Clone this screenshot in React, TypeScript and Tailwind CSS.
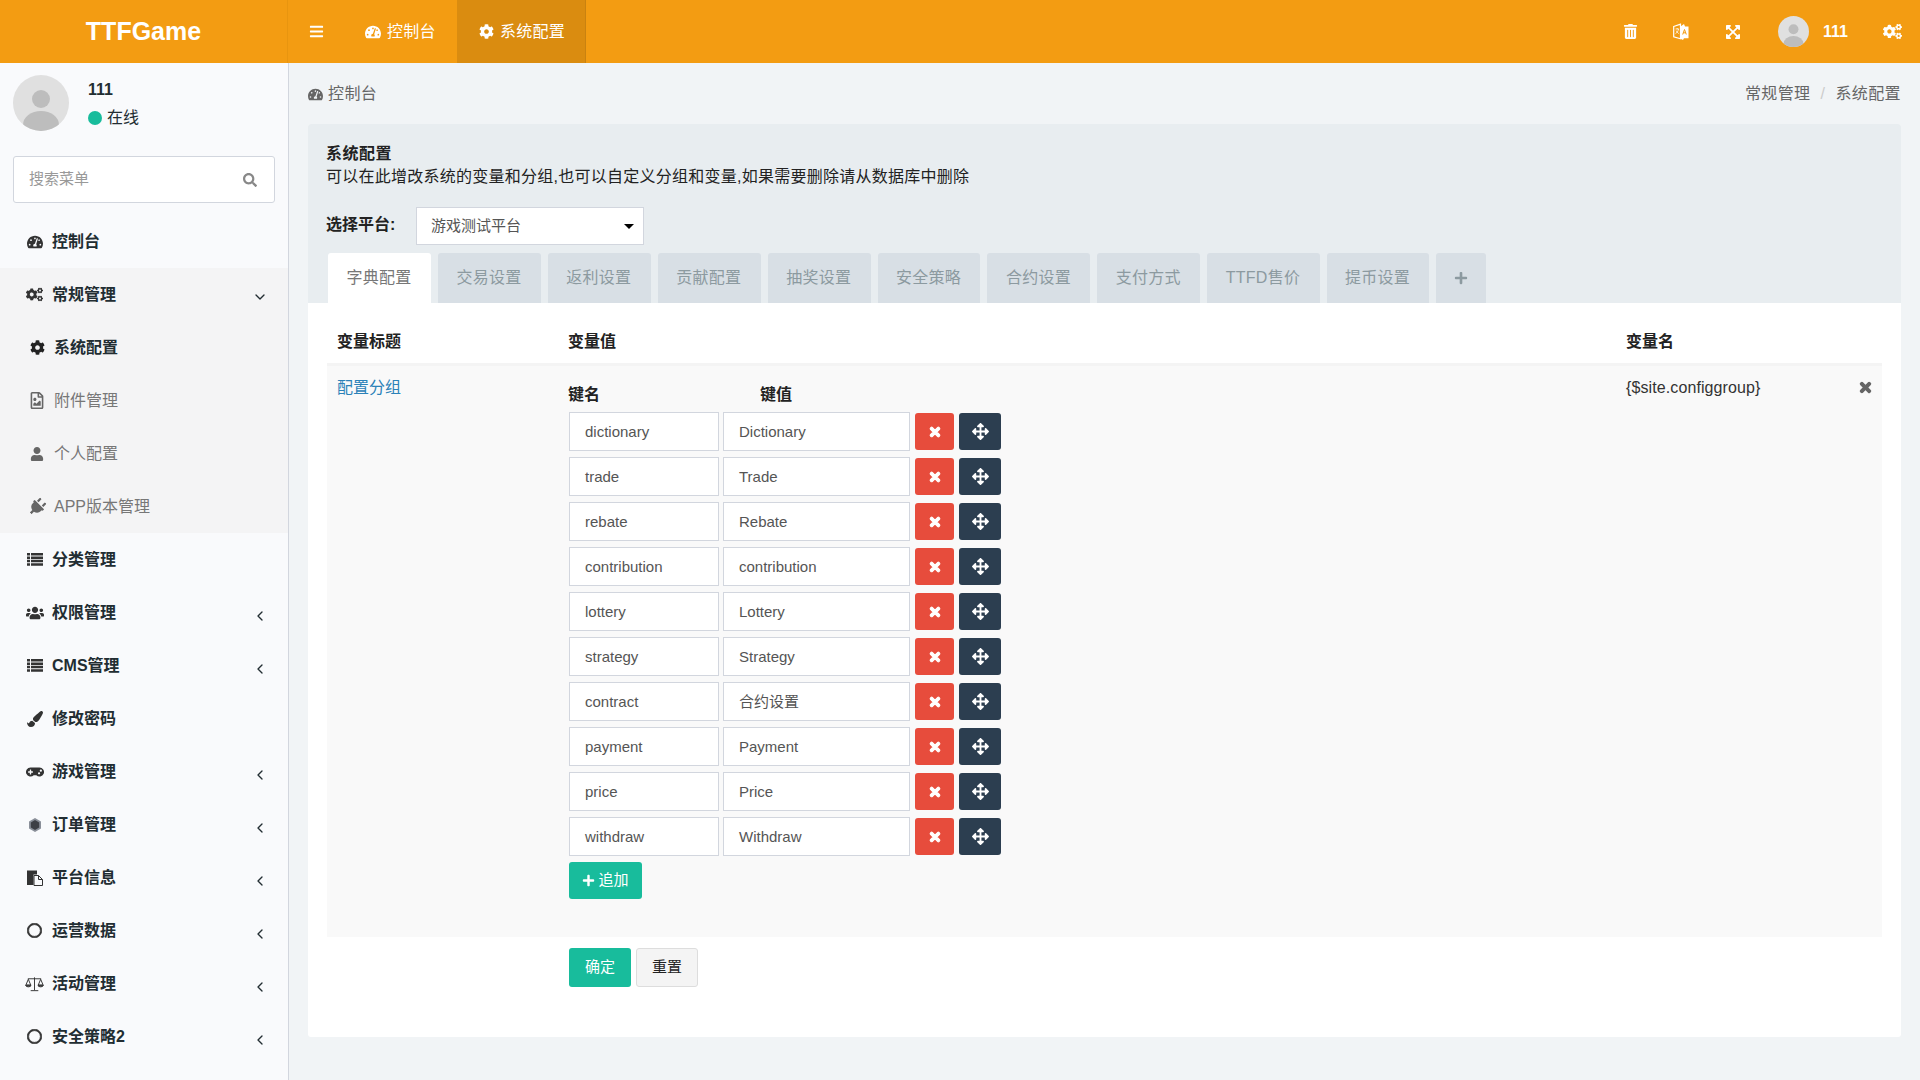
import type { ComponentType, ReactNode } from "react";
import { ChevronDown, ChevronLeft } from "lucide-react";
import {
  FaArrowsAlt,
  FaBars,
  FaCog,
  FaCogs,
  FaExpandArrowsAlt,
  FaGamepad,
  FaPaintBrush,
  FaPlug,
  FaPlus,
  FaRegCircle,
  FaRegFileImage,
  FaSearch,
  FaTachometerAlt,
  FaTimes,
  FaTrashAlt,
  FaUser,
  FaUsers,
} from "react-icons/fa";

type Icon = ComponentType<{ className?: string }>;

const FONT = "font-['Liberation_Sans','Noto_Sans_CJK_SC',sans-serif]";

function HexIcon({ className }: { className?: string }) {
  return (
    <svg viewBox="0 0 16 16" className={className}>
      <polygon points="8,1 14,4.5 14,11.5 8,15 2,11.5 2,4.5" fill="#8a8f99" />
      <polygon points="8,3 12.2,5.5 12.2,10.5 8,13 3.8,10.5 3.8,5.5" fill="#3d3f45" />
    </svg>
  );
}

function PasteIcon({ className }: { className?: string }) {
  return (
    <svg viewBox="0 0 16 16" className={className}>
      <path d="M0 0.5h10v4H6.5v10.5H0z" fill="#333" />
      <path d="M7 5.5h4.5l4 4v6H7z" fill="#f9fafc" stroke="#333" strokeWidth="1" />
      <path d="M11.5 5.5v4h4" fill="none" stroke="#333" strokeWidth="1" />
    </svg>
  );
}

function ScaleIcon({ className }: { className?: string }) {
  return (
    <svg viewBox="0 0 20 16" className={className} fill="none" stroke="#333" strokeWidth="1">
      <path d="M10 1v13.5M6 15h8M3 2.5h14" />
      <path d="M3.5 3L1 9h5zM16.5 3L14 9h5z" />
      <path d="M0.5 9.5c.8 2 5.2 2 6 0zM13.5 9.5c.8 2 5.2 2 6 0z" fill="#555" />
    </svg>
  );
}

function LanguageIcon({ className }: { className?: string }) {
  return (
    <svg viewBox="0 0 16 18" className={className}>
      <path d="M0.7 3.5L7.5 1.2v14.6L0.7 13.8z" fill="none" stroke="#fff" strokeWidth="1.2" />
      <path d="M2.5 6h3.5M4.2 5v1M5.5 6c-.4 2.4-1.5 3.8-3 4.6M3.2 7.6c.5 1.3 1.4 2.3 2.6 3" fill="none" stroke="#fff" strokeWidth="0.8" />
      <path d="M7.5 3.5L11 1l1 2.5h3.5v11.7H11l-1 1.8-2.5-1.2z" fill="#fff" />
      <path d="M9.7 11.5l1.8-5 1.8 5M10.4 9.8h2.2" fill="none" stroke="#f39c12" strokeWidth="1" />
    </svg>
  );
}

function ListIcon({ className }: { className?: string }) {
  return (
    <svg viewBox="0 0 16 13" className={className} fill="#333">
      <path d="M0 0h3v2.5H0zM4 0h12v2.5H4zM0 3.4h3v2.5H0zM4 3.4h12v2.5H4zM0 6.8h3v2.5H0zM4 6.8h12v2.5H4zM0 10.2h3v2.5H0zM4 10.2h12v2.5H4z" />
    </svg>
  );
}

const SUB_MENU: { label: string; icon: Icon; cls: string; active?: boolean }[] = [
  { label: "系统配置", icon: FaCog, cls: "text-[15px]", active: true },
  { label: "附件管理", icon: FaRegFileImage, cls: "text-[17px]" },
  { label: "个人配置", icon: FaUser, cls: "text-[14px]" },
  { label: "APP版本管理", icon: FaPlug, cls: "text-[18px] rotate-45" },
];

const MENU_AFTER: { label: string; icon: Icon; cls: string; arrow?: boolean }[] = [
  { label: "分类管理", icon: ListIcon, cls: "h-[13px] w-[16px]" },
  { label: "权限管理", icon: FaUsers, cls: "text-[18px]", arrow: true },
  { label: "CMS管理", icon: ListIcon, cls: "h-[13px] w-[16px]", arrow: true },
  { label: "修改密码", icon: FaPaintBrush, cls: "text-[16px]" },
  { label: "游戏管理", icon: FaGamepad, cls: "text-[18px]", arrow: true },
  { label: "订单管理", icon: HexIcon, cls: "h-[16px]", arrow: true },
  { label: "平台信息", icon: PasteIcon, cls: "h-[16px]", arrow: true },
  { label: "运营数据", icon: FaRegCircle, cls: "text-[15px] stroke-[24]", arrow: true },
  { label: "活动管理", icon: ScaleIcon, cls: "h-[16px]", arrow: true },
  { label: "安全策略2", icon: FaRegCircle, cls: "text-[15px] stroke-[24]", arrow: true },
];

const TABS = [
  "字典配置",
  "交易设置",
  "返利设置",
  "贡献配置",
  "抽奖设置",
  "安全策略",
  "合约设置",
  "支付方式",
  "TTFD售价",
  "提币设置",
];

const ROWS = [
  ["dictionary", "Dictionary"],
  ["trade", "Trade"],
  ["rebate", "Rebate"],
  ["contribution", "contribution"],
  ["lottery", "Lottery"],
  ["strategy", "Strategy"],
  ["contract", "合约设置"],
  ["payment", "Payment"],
  ["price", "Price"],
  ["withdraw", "Withdraw"],
];

function Avatar({ size }: { size: string }) {
  return (
    <svg viewBox="0 0 56 56" className={`${size} shrink-0 rounded-full`}>
      <rect width="56" height="56" fill="#e0e0e0" />
      <circle cx="28" cy="24" r="9" fill="#bdbdbd" />
      <ellipse cx="28" cy="50" rx="18" ry="14" fill="#bdbdbd" />
    </svg>
  );
}

function MenuItem({ label, icon: Ico, cls, arrow }: { label: string; icon: Icon; cls: string; arrow?: boolean }) {
  return (
    <div className="flex h-[53px] items-center pl-[25px] pr-[20px] text-[16px] font-bold text-[#222d32]">
      <span className="mr-[8px] flex w-[19px] items-center justify-center text-[#333]">
        <Ico className={cls} />
      </span>
      <span className="flex-1">{label}</span>
      {arrow ? <ChevronLeft className="mt-[6px] h-[16px] w-[16px]" strokeWidth={2} /> : null}
    </div>
  );
}

function TopLink({ children, active }: { children: ReactNode; active?: boolean }) {
  return (
    <div
      className={`flex h-full items-center gap-[6px] text-[16px] tracking-[0.3px] text-white ${
        active ? "border-r border-[#c98210] bg-[#da8c10] pl-[22px] pr-[20px]" : "pl-[20px] pr-[21px]"
      }`}
    >
      {children}
    </div>
  );
}

function Sidebar() {
  return (
    <aside className="w-[289px] shrink-0 border-r border-[#d2d6de] bg-[#f9fafc]">
      <div className="flex h-[93px] items-start pl-[13px] pt-[12px]">
        <Avatar size="h-[56px] w-[56px]" />
        <div className="ml-[19px] text-[16px] text-[#222d32]">
          <div className="mt-[5px] font-bold leading-[20px]">111</div>
          <div className="mt-[8px] flex items-center gap-[5px] leading-[20px]">
            <span className="h-[14px] w-[14px] rounded-full bg-[#18bc9c]" />
            在线
          </div>
        </div>
      </div>
      <div className="mx-[13px] flex h-[47px] items-center justify-between rounded-[3px] border border-[#d2d6de] bg-white pl-[15px] pr-[17px] text-[15px] text-[#999]">
        搜索菜单
        <FaSearch className="text-[14px] text-[#888]" />
      </div>
      <div className="mt-[12px]">
        <div className="flex h-[53px] items-center pl-[25px] text-[16px] font-bold text-[#222d32]">
          <span className="mr-[8px] flex w-[19px] justify-center text-[#333]">
            <FaTachometerAlt className="text-[16px]" />
          </span>
          控制台
        </div>
        <div className="bg-[#f4f4f5]">
          <div className="flex h-[53px] items-center pl-[25px] pr-[20px] text-[16px] font-bold text-[#222d32]">
            <span className="mr-[8px] flex w-[19px] justify-center text-[#333]">
              <FaCogs className="text-[17px]" />
            </span>
            <span className="flex-1">常规管理</span>
            <ChevronDown className="mt-[4px] h-[16px] w-[16px]" strokeWidth={2} />
          </div>
          {SUB_MENU.map(({ label, icon: Ico, cls, active }) => (
            <div
              key={label}
              className={`flex h-[53px] items-center pl-[29px] text-[16px] ${
                active ? "font-bold text-[#222d32]" : "text-[#777]"
              }`}
            >
              <span className={`mr-[9px] flex w-[16px] justify-center ${active ? "text-[#222]" : "text-[#666]"}`}>
                <Ico className={cls} />
              </span>
              {label}
            </div>
          ))}
        </div>
        {MENU_AFTER.map((m) => (
          <MenuItem key={m.label} {...m} />
        ))}
      </div>
    </aside>
  );
}

function KeyValueRow({ k, v }: { k: string; v: string }) {
  return (
    <div className="mb-[6px] ml-[1px] flex h-[39px] items-center">
      <div className="flex h-full w-[150px] items-center border border-[#d2d6de] bg-white pl-[15px] pt-[1px] text-[15px] text-[#555]">
        {k}
      </div>
      <div className="ml-[4px] flex h-full w-[187px] items-center border border-[#d2d6de] bg-white pl-[15px] pt-[1px] text-[15px] text-[#555]">
        {v}
      </div>
      <button
        type="button"
        className="ml-[5px] flex h-[37px] w-[39px] items-center justify-center rounded-[3px] bg-[#e74c3c] text-[14px] text-white"
      >
        <FaTimes className="stroke-[40]" />
      </button>
      <button
        type="button"
        className="ml-[5px] flex h-[37px] w-[42px] items-center justify-center rounded-[3px] bg-[#2c3e50] text-[17px] text-white"
      >
        <FaArrowsAlt />
      </button>
    </div>
  );
}

function ConfigPanel() {
  return (
    <section className="mx-[19px] rounded-[3px] bg-white">
      <div className="h-[179px] rounded-t-[3px] bg-[#e8edf0] pl-[18px] pt-[19px]">
        <div className="text-[16px] font-bold leading-[22px] tracking-[0.5px] text-[#222]">系统配置</div>
        <div className="text-[16px] leading-[24px] tracking-[0.25px] text-[#222]">
          可以在此增改系统的变量和分组,也可以自定义分组和变量,如果需要删除请从数据库中删除
        </div>
        <div className="mt-[18px] flex h-[38px] items-center">
          <span className="w-[90px] pb-[2px] text-[16px] font-bold text-[#222]">选择平台:</span>
          <div className="flex h-full w-[228px] items-center justify-between border border-[#d2d6de] bg-white pl-[14px] pr-[9px] text-[15px] text-[#555]">
            游戏测试平台
            <span className="h-0 w-0 border-x-[5px] border-t-[5px] border-x-transparent border-t-black" />
          </div>
        </div>
        <div className="ml-[2px] mt-[8px] flex h-[50px] gap-[7px]">
          {TABS.map((t, i) => (
            <div
              key={t}
              className={`flex h-full items-center rounded-t-[3px] pl-[18.5px] pr-[19.4px] text-[16px] tracking-[0.25px] ${
                i === 0 ? "bg-white text-[#777]" : "bg-[#d8dfe5] text-[#8c9aa0]"
              }`}
            >
              {t}
            </div>
          ))}
          <div className="flex h-full w-[50px] items-center justify-center rounded-t-[3px] bg-[#d8dfe5] text-[14px] text-[#8c9aa0]">
            <FaPlus />
          </div>
        </div>
      </div>
      <div className="px-[19px] pb-[50px]">
        <div className="flex h-[63px] items-center border-b-[3px] border-[#f4f4f4] pt-[18px] text-[16px] font-bold text-[#222]">
          <div className="w-[241px] pl-[10px]">变量标题</div>
          <div className="flex-1">变量值</div>
          <div className="w-[256px]">变量名</div>
        </div>
        <div className="flex h-[571px] bg-[#f9f9f9]">
          <div className="w-[241px] pl-[10px] pt-[10px] text-[16px] text-[#2c82b8]">配置分组</div>
          <div className="flex-1">
            <div className="flex h-[46px] items-end pb-[5px] text-[16px] font-bold text-[#222]">
              <span className="w-[192px]">键名</span>
              <span>键值</span>
            </div>
            {ROWS.map(([k, v]) => (
              <KeyValueRow key={k} k={k} v={v} />
            ))}
            <button
              type="button"
              className="ml-[1px] flex h-[37px] w-[73px] items-center justify-center gap-[3px] rounded-[3px] bg-[#18bc9c] text-[15px] text-white"
            >
              <FaPlus className="text-[13px]" />
              追加
            </button>
          </div>
          <div className="flex w-[256px] justify-between pr-[9px] pt-[10px] text-[16px] tracking-[0.1px] text-[#333]">
            {"{$site.configgroup}"}
            <FaTimes className="mt-[4px] stroke-[40] text-[15px] text-[#666]" />
          </div>
        </div>
        <div className="mt-[11px] flex gap-[5px] pl-[242px]">
          <button type="button" className="h-[39px] w-[62px] rounded-[3px] bg-[#18bc9c] text-[15px] text-white">
            确定
          </button>
          <button
            type="button"
            className="h-[39px] w-[62px] rounded-[3px] border border-[#ddd] bg-[#f4f4f4] text-[15px] text-[#222]"
          >
            重置
          </button>
        </div>
      </div>
    </section>
  );
}

export default function App() {
  return (
    <div className={`flex h-screen flex-col overflow-hidden bg-[#f1f4f6] ${FONT}`}>
      <header className="flex h-[63px] shrink-0 items-center bg-[#f39c12] text-white">
        <div className="flex h-full w-[288px] items-center justify-center border-r border-[#e8950f] text-[25px] font-bold">
          TTFGame
        </div>
        <div className="flex h-full w-[57px] items-center justify-center text-[15px]">
          <FaBars />
        </div>
        <TopLink>
          <FaTachometerAlt className="text-[16px]" />
          控制台
        </TopLink>
        <TopLink active>
          <FaCog className="text-[15px]" />
          系统配置
        </TopLink>
        <div className="ml-auto flex h-full items-center pr-[18px]">
          <FaTrashAlt className="text-[15px]" />
          <LanguageIcon className="ml-[35px] h-[18px] w-[16px]" />
          <FaExpandArrowsAlt className="ml-[36px] text-[16px]" />
          <Avatar size="ml-[37px] h-[31px] w-[31px]" />
          <span className="ml-[14px] text-[16px] font-bold">111</span>
          <FaCogs className="ml-[35px] text-[19px]" />
        </div>
      </header>
      <div className="flex flex-1 overflow-hidden">
        <Sidebar />
        <main className="min-w-0 flex-1">
          <div className="flex h-[61px] items-center justify-between px-[19px] pt-[1px] text-[16px] tracking-[0.4px] text-[#666]">
            <div className="flex items-center gap-[5px]">
              <FaTachometerAlt className="text-[15px]" />
              控制台
            </div>
            <div>
              常规管理<span className="mx-[10px] text-[#ccc]">/</span>系统配置
            </div>
          </div>
          <ConfigPanel />
        </main>
      </div>
    </div>
  );
}
